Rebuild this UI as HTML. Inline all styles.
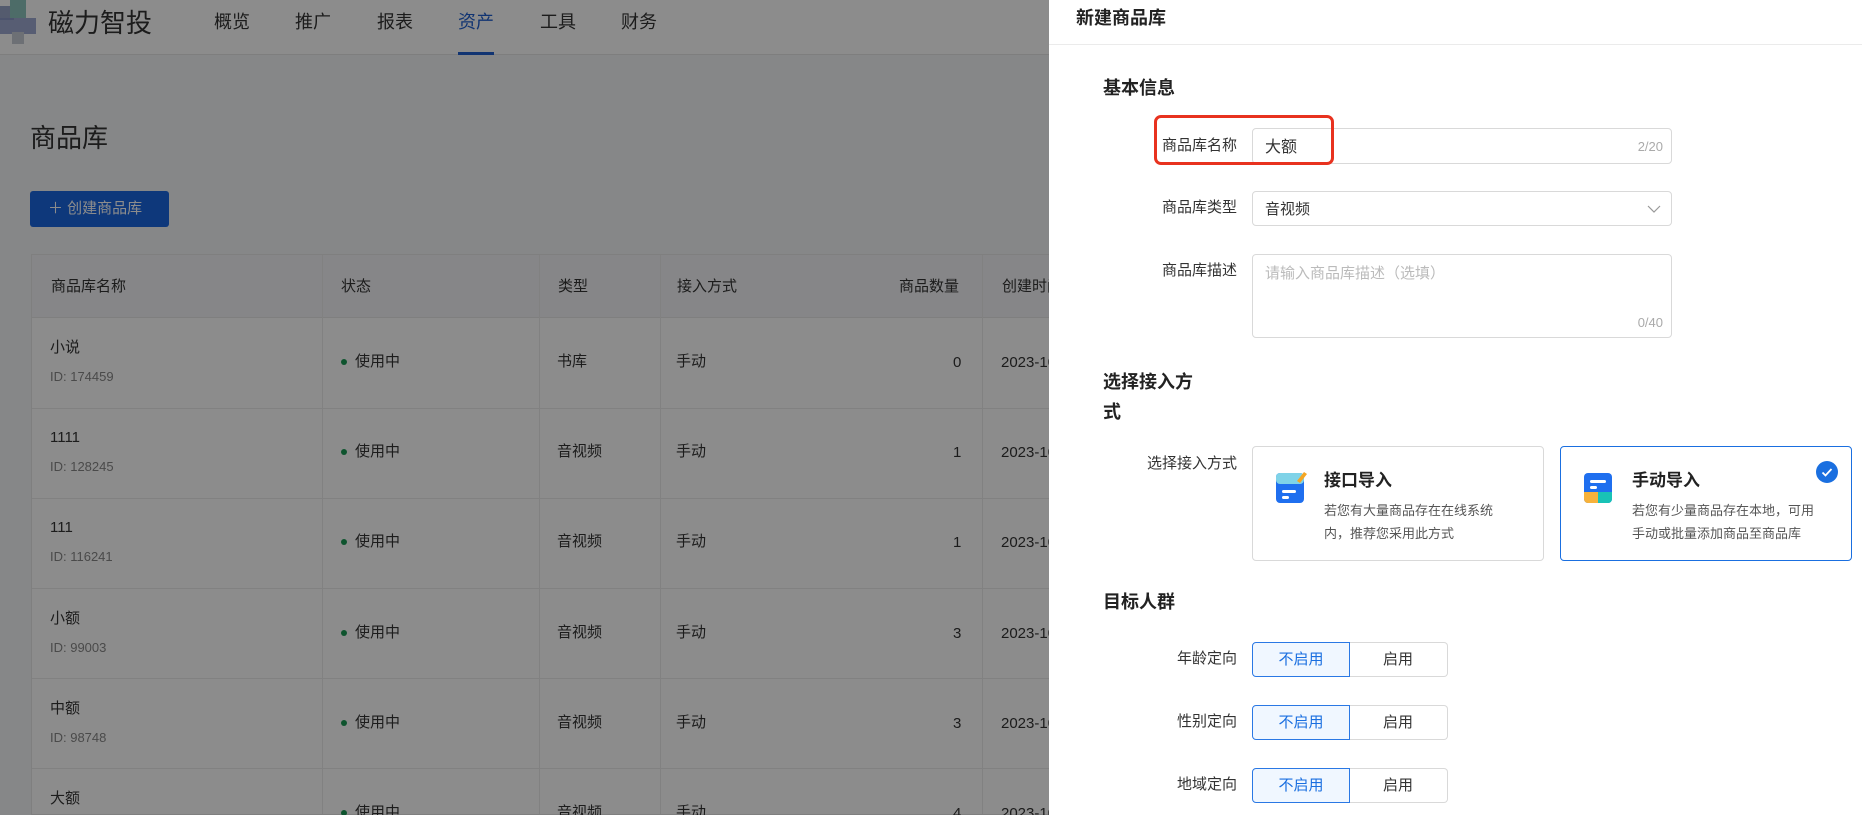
<!DOCTYPE html>
<html><head><meta charset="utf-8"><style>
*{margin:0;padding:0;box-sizing:border-box}
html,body{width:1862px;height:815px;overflow:hidden}
body{position:relative;background:#f5f6f8;font-family:"Liberation Sans","Noto Sans CJK SC",sans-serif;color:#333}
.a{position:absolute;white-space:nowrap}
.nav{position:absolute;left:0;top:0;width:1862px;height:55px;background:#fff;border-bottom:1px solid #e6e6e6}
.nav .i{position:absolute;top:8px;font-size:18px;color:#333}
.tbl{position:absolute;left:31px;top:254px;width:1400px;height:561px;background:#fff;border:1px solid #e8e8e8;overflow:hidden}
.th{position:absolute;left:0;top:0;width:100%;height:63px;background:#f4f5f7;border-bottom:1px solid #e8e8e8}
.vl{position:absolute;top:0;width:1px;height:600px;background:#ececec}
.hl{position:absolute;left:0;width:100%;height:1px;background:#ececec}
.t{font-size:15px;color:#333;line-height:20px}
.id{font-size:13px;color:#888;line-height:18px}
.ov{position:absolute;left:0;top:0;width:1862px;height:815px;background:rgba(0,0,0,0.45)}
.panel{position:absolute;left:1049px;top:0;width:813px;height:815px;background:#fff;overflow:hidden}
.lab{position:absolute;font-size:15px;color:#333;text-align:right;width:140px;line-height:20px}
.inp{position:absolute;border:1px solid #d9d9d9;border-radius:4px;background:#fff}
.card{position:absolute;top:446px;width:292px;height:115px;border:1px solid #d9d9d9;border-radius:4px}
.seg{position:absolute;left:203px;width:196px;height:35px}
.seg div{position:absolute;top:0;height:35px;font-size:15px;line-height:33px;text-align:center}
</style></head><body>
<div class="nav">
  <div class="a" style="left:0;top:6px;width:14px;height:14px;background:#9aa6c8"></div>
  <div class="a" style="left:10px;top:0;width:16px;height:18px;background:#8cc5bd"></div>
  <div class="a" style="left:0;top:18px;width:36px;height:16px;background:#8795c5;opacity:.8"></div>
  <div class="a" style="left:12px;top:32px;width:12px;height:12px;background:#c7ccd6"></div>
  <div class="a" style="left:48px;top:3px;font-size:26px;color:#333">磁力智投</div>
  <div class="i" style="left:214px">概览</div>
  <div class="i" style="left:295px">推广</div>
  <div class="i" style="left:377px">报表</div>
  <div class="i" style="left:458px;color:#1f5fd0">资产</div>
  <div class="a" style="left:458px;top:52px;width:36px;height:3px;background:#1f5fd0"></div>
  <div class="i" style="left:540px">工具</div>
  <div class="i" style="left:621px">财务</div>
</div>
<div class="a" style="left:30px;top:118px;font-size:26px;color:#333">商品库</div>
<div class="a" style="left:30px;top:191px;width:139px;height:36px;background:#1a66e0;border-radius:3px;color:#fff;font-size:15px;line-height:36px;padding-left:18px">＋ 创建商品库</div>
<div class="tbl">
  <div class="th"></div>
  <div class="vl" style="left:290px"></div><div class="vl" style="left:507px"></div><div class="vl" style="left:628px"></div><div class="vl" style="left:950px"></div><div class="vl" style="left:1018px"></div>
  <div class="hl" style="top:153px"></div><div class="hl" style="top:243px"></div><div class="hl" style="top:333px"></div><div class="hl" style="top:423px"></div><div class="hl" style="top:513px"></div>
  <div class="a t" style="left:19px;top:22px">商品库名称</div><div class="a t" style="left:309px;top:22px">状态</div><div class="a t" style="left:526px;top:22px">类型</div><div class="a t" style="left:645px;top:22px">接入方式</div><div class="a t" style="left:867px;top:22px">商品数量</div><div class="a t" style="left:970px;top:22px">创建时间</div>
</div>
<div id="rows"></div>
<script>
var d=[["小说","174459","书库","0"],["1111","128245","音视频","1"],["111","116241","音视频","1"],["小额","99003","音视频","3"],["中额","98748","音视频","3"],["大额","98700","音视频","4"]];
var h="";d.forEach(function(r,i){var y=317+i*90.2;
h+='<div class="a t" style="left:50px;top:'+(y+21)+'px">'+r[0]+'</div><div class="a id" style="left:50px;top:'+(y+51)+'px">ID: '+r[1]+'</div>'+
'<div class="a" style="left:341px;top:'+(y+42)+'px;width:6px;height:6px;border-radius:3px;background:#1a9a55"></div><div class="a t" style="left:355px;top:'+(y+35)+'px">使用中</div>'+
'<div class="a t" style="left:557px;top:'+(y+35)+'px">'+r[2]+'</div><div class="a t" style="left:676px;top:'+(y+35)+'px">手动</div>'+
'<div class="a t" style="left:953px;top:'+(y+36)+'px">'+r[3]+'</div><div class="a t" style="left:1001px;top:'+(y+36)+'px">2023-10-12</div>';});
document.getElementById("rows").innerHTML=h;
</script>
<div class="ov"></div>
<div class="panel">
  <div class="a" style="left:27px;top:4px;font-size:18px;font-weight:bold;color:#222">新建商品库</div>
  <div class="a" style="left:0;top:44px;width:813px;height:1px;background:#ebebeb"></div>
  <div class="a" style="left:54px;top:74px;font-size:18px;font-weight:bold;color:#222">基本信息</div>

  <div class="inp" style="left:203px;top:128px;width:420px;height:36px"><span class="a" style="left:12px;top:4px;font-size:16px;color:#333">大额</span><span class="a" style="right:8px;top:10px;font-size:13px;color:#aaa">2/20</span></div>
  <div class="lab" style="left:48px;top:136px">商品库名称</div>
  <div class="a" style="left:105px;top:115px;width:180px;height:50px;border:3px solid #e8321f;border-radius:7px"></div>

  <div class="lab" style="left:48px;top:198px">商品库类型</div>
  <div class="inp" style="left:203px;top:191px;width:420px;height:35px"><span class="a" style="left:12px;top:6px;font-size:15px;color:#333">音视频</span>
    <svg class="a" style="right:10px;top:12px" width="14" height="10" viewBox="0 0 14 10"><path d="M1 2l6 6 6-6" fill="none" stroke="#999" stroke-width="1.2"/></svg></div>

  <div class="lab" style="left:48px;top:261px">商品库描述</div>
  <div class="inp" style="left:203px;top:254px;width:420px;height:84px"><span class="a" style="left:12px;top:7px;font-size:15px;color:#bbb">请输入商品库描述（选填）</span><span class="a" style="right:8px;top:60px;font-size:13px;color:#aaa">0/40</span></div>

  <div class="a" style="left:54px;top:367px;font-size:18px;font-weight:bold;color:#222;line-height:30px">选择接入方<br>式</div>
  <div class="lab" style="left:48px;top:454px">选择接入方式</div>

  <div class="card" style="left:203px">
    <svg class="a" style="left:22px;top:23px" width="32" height="34" viewBox="0 0 32 34"><rect x="1" y="3" width="28" height="30" rx="4" fill="#1f6fef"/><rect x="1" y="3" width="28" height="11" rx="4" fill="#7fd3e8"/><path d="M22 11l7-9 3 2-7 9z" fill="#f5a623"/><rect x="7" y="20" width="14" height="3" rx="1.5" fill="#fff"/><rect x="7" y="26" width="7" height="3" rx="1.5" fill="#fff"/></svg>
    <div class="a" style="left:71px;top:19px;font-size:17px;font-weight:bold;color:#222">接口导入</div>
    <div class="a" style="left:71px;top:52px;font-size:13px;color:#555;line-height:23px">若您有大量商品存在在线系统<br>内，推荐您采用此方式</div>
  </div>
  <div class="card" style="left:511px;border-color:#1a6fe0">
    <svg class="a" style="left:22px;top:23px" width="32" height="34" viewBox="0 0 32 34"><rect x="1" y="3" width="28" height="30" rx="4" fill="#1f6fef"/><path d="M1 22h14v11H5a4 4 0 0 1-4-4z" fill="#f7b23b"/><path d="M15 22h14v7a4 4 0 0 1-4 4H15z" fill="#19c2b6"/><rect x="7" y="10" width="16" height="3" rx="1.5" fill="#fff"/><rect x="7" y="16" width="7" height="3" rx="1.5" fill="#fff"/></svg>
    <div class="a" style="left:71px;top:19px;font-size:17px;font-weight:bold;color:#222">手动导入</div>
    <div class="a" style="left:71px;top:52px;font-size:13px;color:#555;line-height:23px">若您有少量商品存在本地，可用<br>手动或批量添加商品至商品库</div>
    <svg class="a" style="left:254px;top:13px" width="24" height="24" viewBox="0 0 24 24"><circle cx="12" cy="12" r="11" fill="#1a6fe0"/><path d="M7.5 12.5l3 3 6-6.5" fill="none" stroke="#fff" stroke-width="1.8"/></svg>
  </div>

  <div class="a" style="left:54px;top:588px;font-size:18px;font-weight:bold;color:#222">目标人群</div>

  <div class="lab" style="left:48px;top:649px">年龄定向</div>
  <div class="seg" style="top:642px"><div style="left:0;width:98px;background:#f0f7ff;border:1.5px solid #2a78e4;border-radius:4px 0 0 4px;color:#1a6fe0;z-index:1">不启用</div><div style="left:97px;width:99px;border:1px solid #d9d9d9;border-left:none;border-radius:0 4px 4px 0">启用</div></div>
  <div class="lab" style="left:48px;top:712px">性别定向</div>
  <div class="seg" style="top:705px"><div style="left:0;width:98px;background:#f0f7ff;border:1.5px solid #2a78e4;border-radius:4px 0 0 4px;color:#1a6fe0;z-index:1">不启用</div><div style="left:97px;width:99px;border:1px solid #d9d9d9;border-left:none;border-radius:0 4px 4px 0">启用</div></div>
  <div class="lab" style="left:48px;top:775px">地域定向</div>
  <div class="seg" style="top:768px"><div style="left:0;width:98px;background:#f0f7ff;border:1.5px solid #2a78e4;border-radius:4px 0 0 4px;color:#1a6fe0;z-index:1">不启用</div><div style="left:97px;width:99px;border:1px solid #d9d9d9;border-left:none;border-radius:0 4px 4px 0">启用</div></div>
</div>
</body></html>
